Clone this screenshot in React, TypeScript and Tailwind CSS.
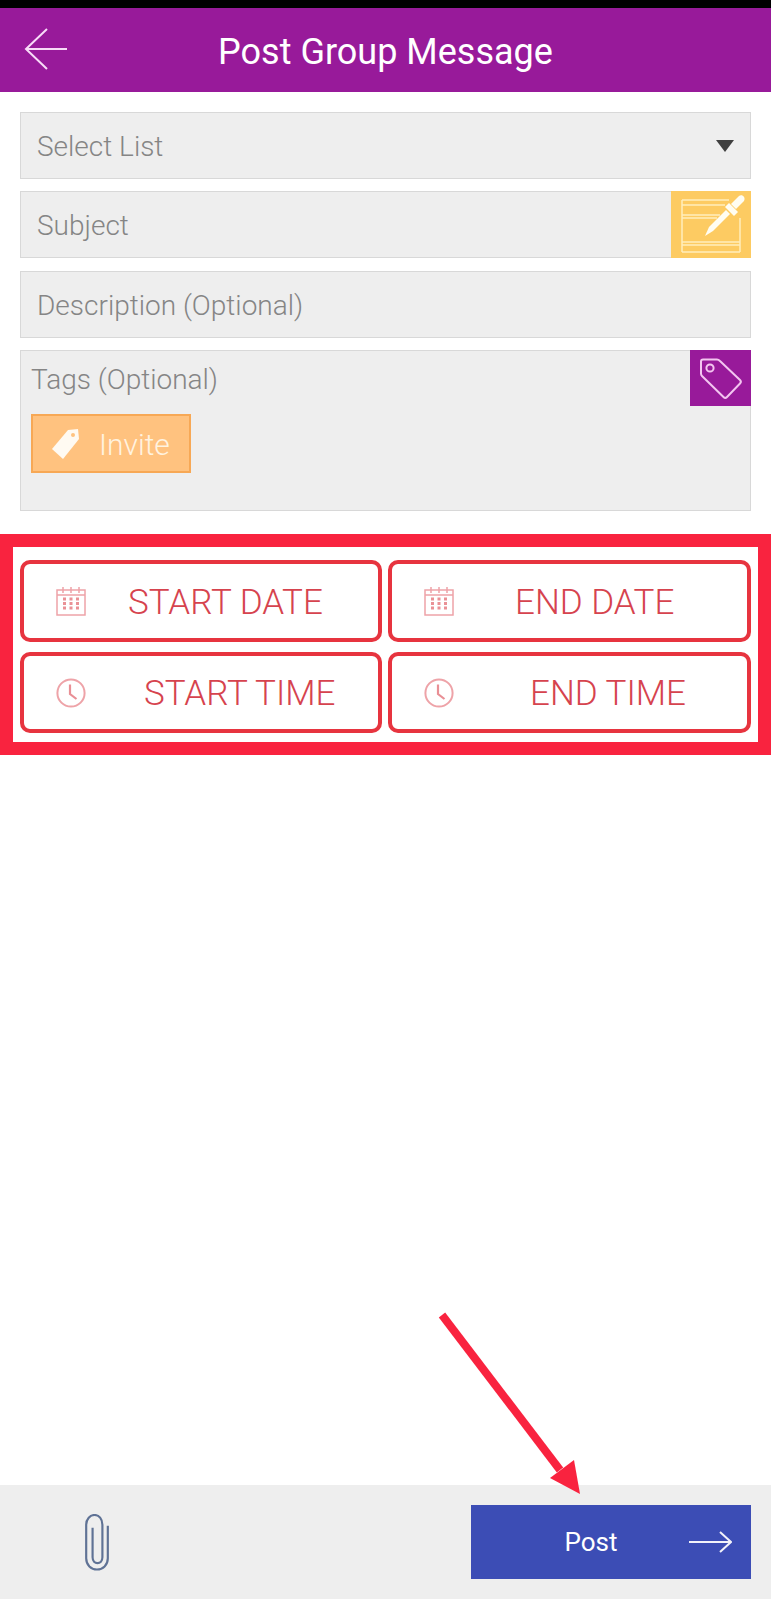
import type { ReactNode } from "react";

const font = "font-['Roboto',sans-serif] font-light";

function CalendarIcon() {
  return (
    <svg width="30" height="30" viewBox="0 0 30 30" fill="none" stroke="#eea3a8" strokeWidth="1.5">
      <rect x="1" y="4" width="28" height="25" />
      <path d="M1 9H29M7 1V7M15 1V7M23 1V7" />
      <path
        d="M7 13h3M13.5 13h3M20 13h3M7 17.5h3M13.5 17.5h3M20 17.5h3M7 22h3M13.5 22h3M20 22h3"
        strokeWidth="3"
        stroke="#ea9196"
      />
    </svg>
  );
}

function ClockIcon() {
  return (
    <svg width="30" height="30" viewBox="0 0 30 30" fill="none" stroke="#eea3a8" strokeWidth="2">
      <circle cx="15" cy="15" r="13.6" />
      <path d="M14 6.5V16L20.5 21" strokeWidth="2.2" stroke="#e98f95" />
    </svg>
  );
}

function DateButton({ icon, label, offset }: { icon: ReactNode; label: string; offset: string }) {
  return (
    <div className="flex items-center h-full border-4 border-[#e7343f] rounded-[10px] bg-white pl-[32px]">
      <div className="w-[30px] h-[30px] shrink-0">{icon}</div>
      <span className={`${font} ${offset} pt-[2px] text-[35px] leading-none text-[#d6434e] whitespace-nowrap`}>{label}</span>
    </div>
  );
}

function Field({ label, children, className }: { label: string; children?: ReactNode; className?: string }) {
  return (
    <div className={`flex items-center justify-between h-[67px] bg-[#eeeeee] border border-[#d8d8d8] ${className ?? ""}`}>
      <span className={`${font} pl-4 pt-[2px] text-[28px] text-[#858585]`}>{label}</span>
      {children}
    </div>
  );
}

export default function App() {
  return (
    <div className="relative flex flex-col w-[771px] h-[1600px] bg-white overflow-hidden">
      <div className="h-2 bg-black shrink-0" />
      <header className="relative flex items-center justify-center h-[84px] bg-[#981a9a] shrink-0">
        <svg className="absolute left-[24px] top-[19px]" width="44" height="44" viewBox="0 0 44 44" fill="none" stroke="#f8dcf8" strokeWidth="2">
          <path d="M43 22H2M23 2L2 22L23 42" />
        </svg>
        <h1 className={`${font} font-normal pt-[3px] text-[36px] leading-none text-white`}>Post Group Message</h1>
      </header>

      <div className="flex flex-col gap-3 px-5 pt-5 shrink-0">
        <Field label="Select List">
          <svg className="mr-4" width="18" height="12" viewBox="0 0 18 12">
            <path d="M0 0H18L9 12Z" fill="#3f3f3f" />
          </svg>
        </Field>
        <Field label="Subject">
          <div className="w-[80px] h-[67px] -my-px -mr-px bg-[#fdcb62]">
            <svg width="80" height="67" viewBox="0 0 80 67" fill="none" stroke="#ffeebc" strokeWidth="1.5">
              <path d="M11 9H58M11 14H54M11 24H49M11 27H46M11 9V61M69 27V61M11 51H69M11 54H69M11 61H69" />
              <path d="M34 45L38 36L55 19L59 23L42 40Z" fill="#fffdf2" stroke="none" />
              <path d="M54 16L58 12L67 21L63 25Z" fill="#fffdf2" stroke="none" />
              <path d="M60 13L68 5C71 3 75 6 73 10L65 18Z" fill="#fffdf2" stroke="none" />
            </svg>
          </div>
        </Field>
        <Field label="Description (Optional)" className="mt-px" />
        <div className="relative h-[161px] bg-[#eeeeee] border border-[#d8d8d8]">
          <p className={`${font} pl-[10px] pt-[8px] text-[28px] leading-[42px] text-[#858585]`}>Tags (Optional)</p>
          <div className="flex items-center w-[160px] h-[59px] ml-[10px] mt-[13px] bg-[#ffc27f] border-2 border-[#f7a855] pl-[17px] gap-[19px]">
            <svg width="30" height="32" viewBox="0 0 30 32">
              <path d="M18 2L28 1L29 11L13 31L2 21Z" fill="#fffaf2" />
              <circle cx="23" cy="7" r="2" fill="#ffc27f" />
            </svg>
            <span className={`${font} pt-[2px] text-[30px] leading-none text-[#fff3e0]`}>Invite</span>
          </div>
          <div className="absolute -top-px -right-px w-[61px] h-[56px] bg-[#981a9a]">
            <svg width="61" height="56" viewBox="0 0 61 56" fill="none" stroke="#f3c5f0" strokeWidth="2">
              <path d="M13 9.5H27C28 9.5 29 10 30 11L50 30C51 31 51 32.5 50 33.5L37 47C36 48 34.5 48 33.5 47L12 26C11.2 25.2 11 24.5 11 23.5V11.5C11 10.5 12 9.5 13 9.5Z" />
              <circle cx="20" cy="18" r="3.6" />
            </svg>
          </div>
        </div>
      </div>

      <section className="mt-[23px] border-[13px] border-[#f9233f] px-[7px] pt-[13px] pb-[9px] shrink-0 h-[221px]">
        <div className="grid grid-cols-[362px_363px] grid-rows-[82px_81px] gap-x-[6px] gap-y-[10px]">
          <DateButton icon={<CalendarIcon />} label="START DATE" offset="ml-[42px]" />
          <DateButton icon={<CalendarIcon />} label="END DATE" offset="ml-[61px]" />
          <DateButton icon={<ClockIcon />} label="START TIME" offset="ml-[58px]" />
          <DateButton icon={<ClockIcon />} label="END TIME" offset="ml-[76px]" />
        </div>
      </section>

      <footer className="mt-auto mb-px flex items-center justify-between h-[114px] bg-[#eeeeee] pl-[85px] pr-5 shrink-0">
        <svg width="24" height="57" viewBox="0 0 24 58" fill="none" stroke="#5f7295" strokeWidth="2.2">
          <path d="M23 12V45C23 52 18 56.5 12 56.5C6 56.5 1 52 1 45V11C1 5 5 1 9.5 1C14 1 17.5 5 17.5 11V44C17.5 48 15 50 12.5 50C10 50 7.5 48 7.5 44V14" />
        </svg>
        <div className="relative flex items-center justify-center w-[280px] h-[74px] bg-[#3c4db5]">
          <span className={`${font} font-normal mr-[40px] text-[26px] leading-none text-white`}>Post</span>
          <svg className="absolute right-[19px] top-[26px]" width="44" height="22" viewBox="0 0 44 22" fill="none" stroke="#f2f2fa" strokeWidth="2">
            <path d="M1 11H42M32 1L43 11L32 21" />
          </svg>
        </div>
      </footer>

      {/* annotation arrow over the post button */}
      <svg className="absolute left-[430px] top-[1305px]" width="160" height="195" viewBox="0 0 160 195">
        <path d="M12 10L130 165" stroke="#f9233f" strokeWidth="8" fill="none" />
        <path d="M150 189L144 155L120 173Z" fill="#f9233f" />
      </svg>
    </div>
  );
}
